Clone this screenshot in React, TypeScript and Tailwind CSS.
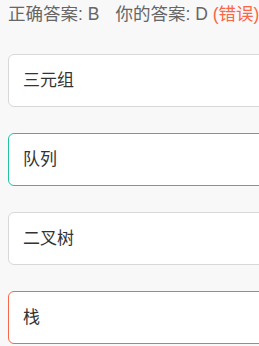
const options = [
  { label: '三元组', state: 'none' },
  { label: '队列', state: 'correct' },
  { label: '二叉树', state: 'none' },
  { label: '栈', state: 'wrong' },
];

export default function App() {
  return (
    <div
      className="h-[346px] w-[259px] overflow-hidden bg-[#f8f8f8]"
      style={{ fontFamily: '"Liberation Sans", "Noto Sans CJK SC", sans-serif' }}
    >
      <div className="flex items-center whitespace-nowrap pl-2 pt-[2px] text-[17.5px] leading-[24px] text-[#666]">
        <span>正确答案: B</span>
        <span className="ml-[16px]">你的答案: D</span>
        <span className="ml-[5px] text-[#fa6648]">(错误)</span>
      </div>
      <div className="mt-[28px] flex flex-col gap-[26px] pl-2">
        {options.map((o) => (
          <div
            key={o.label}
            className={
              'flex h-[53px] w-[290px] shrink-0 items-center rounded-[6px] border bg-white pl-[14px] text-[17px] text-[#333] ' +
              (o.state === 'correct'
                ? 'border-[#22c3a0]'
                : o.state === 'wrong'
                  ? 'border-[#fa6648]'
                  : 'border-[#d8d8d8]')
            }
          >
            {o.label}
          </div>
        ))}
      </div>
    </div>
  );
}
